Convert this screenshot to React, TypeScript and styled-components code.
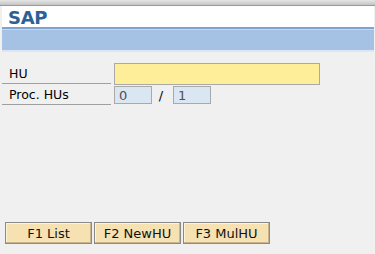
import React from "react";
import styled, { createGlobalStyle } from "styled-components";

const Global = createGlobalStyle`
  html, body { margin: 0; padding: 0; background: #f0f0f0; }
  body { font-family: "DejaVu Sans", Verdana, sans-serif; }
`;

const Page = styled.div`
  width: 375px;
  height: 254px;
  display: flex;
  flex-direction: column;
  background: #f0f0f0;
  overflow: hidden;
`;

const TopStrip = styled.div`
  height: 5px;
  background: linear-gradient(#e6e6e6, #c4c4c4);
  border-bottom: 1px solid #9a9a9a;
`;

const Header = styled.div`
  margin: 0 1px 0 2px;
  height: 21px;
  background: #ffffff;
  display: flex;
  align-items: center;
  padding-left: 6px;
`;

const Logo = styled.span`
  font-family: "DejaVu Sans", Verdana, sans-serif;
  font-weight: bold;
  font-size: 18px;
  color: #2b6197;
  letter-spacing: -0.3px;
  line-height: 1;
  margin-top: 2px;
`;

const Band = styled.div`
  margin: 0 1px 0 2px;
  height: 21px;
  background: #a5c2e5;
  border-top: 2px solid #7fa3cf;
  border-bottom: 2px solid #dbe6f2;
  box-shadow: inset 0 1px 0 #c8d9ef;
`;

const Form = styled.div`
  margin-top: 11px;
  margin-left: 2px;
  display: flex;
  flex-direction: column;
`;

const Row = styled.div`
  display: flex;
  align-items: stretch;
  height: 21px;
`;

const Label = styled.div`
  width: 102px;
  padding-left: 7px;
  font-size: 12.5px;
  color: #000;
  display: flex;
  align-items: flex-end;
  padding-bottom: 2px;
  border-bottom: 1px solid #a0a0a0;
  margin-right: 3px;
`;

const Field = styled.div<{ $w: number; $bg: string }>`
  width: ${(p) => p.$w}px;
  box-sizing: border-box;
  height: ${(p) => (p.$bg === "yellow" ? 22 : 18)}px;
  margin-top: ${(p) => (p.$bg === "yellow" ? 0 : 2)}px;
  background: ${(p) => (p.$bg === "yellow" ? "#ffee99" : "#dbe6f3")};
  border: 1px solid #a9a9a9;
  font-size: 13px;
  color: #505050;
  padding-left: 4px;
  display: flex;
  align-items: center;
`;

const Slash = styled.span`
  font-size: 13px;
  color: #000;
  width: 21px;
  display: flex;
  align-items: center;
  justify-content: center;
  margin-top: 2px;
  padding-right: 3px;
  box-sizing: border-box;
`;

const ButtonBar = styled.div`
  margin-top: auto;
  margin-bottom: 10px;
  margin-left: 5px;
  display: flex;
  gap: 2px;
`;

const FButton = styled.div`
  width: 87px;
  height: 22px;
  box-sizing: border-box;
  background: #f6e1b3;
  border: 1px solid #8a8a8a;
  box-shadow: inset -1px -1px 0 #c9b58c, inset 1px 1px 0 #fff4d8;
  font-size: 13px;
  color: #111;
  display: flex;
  align-items: center;
  justify-content: center;
`;

export default function App() {
  return (
    <Page>
      <Global />
      <TopStrip />
      <Header>
        <Logo>SAP</Logo>
      </Header>
      <Band />
      <Form>
        <Row>
          <Label>HU</Label>
          <Field $w={206} $bg="yellow" />
        </Row>
        <Row>
          <Label>Proc. HUs</Label>
          <Field $w={38} $bg="blue">0</Field>
          <Slash>/</Slash>
          <Field $w={38} $bg="blue">1</Field>
        </Row>
      </Form>
      <ButtonBar>
        <FButton>F1 List</FButton>
        <FButton>F2 NewHU</FButton>
        <FButton>F3 MulHU</FButton>
      </ButtonBar>
    </Page>
  );
}
